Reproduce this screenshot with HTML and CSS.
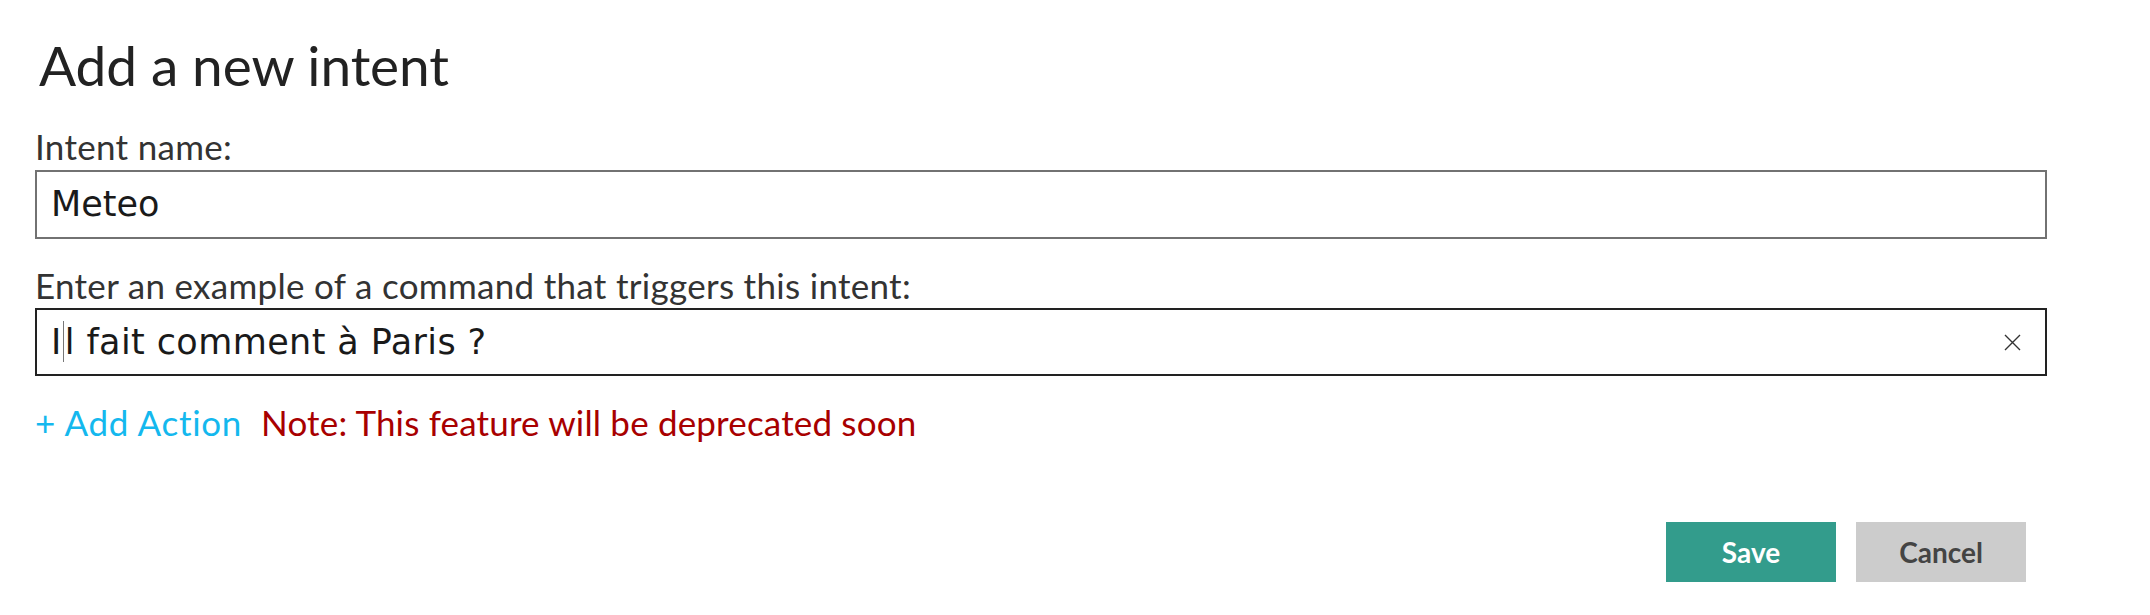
FILE: index.html
```html
<!DOCTYPE html>
<html lang="en">
<head>
<meta charset="utf-8">
<title>Add a new intent</title>
<link rel="stylesheet" href="styles.css">
</head>
<body>
<div class="dialog">
  <h1 class="title">Add a new intent</h1>
  <label class="label label-first">Intent name:</label>
  <div class="field field-name">Meteo</div>
  <label class="label label-second">Enter an example of a command that triggers this intent:</label>
  <div class="field field-example">
    <span class="field-text">I<span class="caret"></span>l fait comment à Paris ?</span>
    <svg class="clear-icon" width="17" height="17" viewBox="0 0 17 17" aria-hidden="true">
      <path d="M1 1 L16 16 M16 1 L1 16" stroke="#333" stroke-width="1.4" fill="none"/>
    </svg>
  </div>
  <div class="actions-line">
    <a class="add-action">+ Add Action</a>
    <span class="note">Note: This feature will be deprecated soon</span>
  </div>
  <div class="buttons">
    <button class="btn btn-save">Save</button>
    <button class="btn btn-cancel">Cancel</button>
  </div>
</div>
</body>
</html>
```
FILE: styles.css
```css
html, body {
  margin: 0;
  padding: 0;
  background: #ffffff;
}
body {
  width: 2150px;
  height: 615px;
  overflow: hidden;
  font-family: "Lato", "Open Sans", sans-serif;
}
.dialog {
  display: flex;
  flex-direction: column;
  margin-left: 35px;
  width: 2012px;
}
.title {
  margin: 37px 0 0 4px;
  font-size: 55px;
  line-height: 56px;
  font-weight: 400;
  letter-spacing: -0.1px;
  color: #222222;
}
.label {
  display: block;
  font-size: 35px;
  line-height: 34px;
  letter-spacing: 0.3px;
  color: #333333;
}
.label-first {
  margin-top: 36px;
}
.label-second {
  margin-top: 29px;
}
.field {
  box-sizing: border-box;
  display: flex;
  align-items: center;
  padding-left: 14px;
  font-family: "DejaVu Sans", "Verdana", sans-serif;
  font-size: 35px;
  color: #1a1a1a;
  background: #fff;
}
.field-name {
  margin-top: 7px;
  height: 69px;
  line-height: 65px;
  border: 2px solid #727272;
}
.field-example {
  margin-top: 6px;
  height: 68px;
  line-height: 64px;
  border: 2px solid #222222;
  justify-content: space-between;
  padding-right: 24px;
}
.field-text {
  white-space: pre;
  letter-spacing: 0.4px;
}
.caret {
  display: inline-block;
  width: 0;
  height: 41px;
  border-left: 1px solid #777;
  vertical-align: -8px;
  margin: 0 1px;
}
.clear-icon {
  display: block;
}
.actions-line {
  display: flex;
  align-items: baseline;
  gap: 19px;
  margin-top: 29px;
  font-size: 35px;
  line-height: 34px;
}
.add-action {
  color: #14b8ee;
  letter-spacing: 0.7px;
  cursor: pointer;
}
.note {
  color: #a80000;
  letter-spacing: 0.17px;
}
.buttons {
  display: flex;
  justify-content: flex-end;
  gap: 20px;
  margin-top: 83px;
  margin-right: 21px;
}
.btn {
  width: 170px;
  height: 60px;
  border: none;
  font-family: "Lato", "Open Sans", sans-serif;
  font-size: 28px;
  font-weight: 700;
  padding: 0;
  cursor: pointer;
}
.btn-save {
  background: #339c8c;
  color: #ffffff;
}
.btn-cancel {
  background: #cccccc;
  color: #444444;
}
```
